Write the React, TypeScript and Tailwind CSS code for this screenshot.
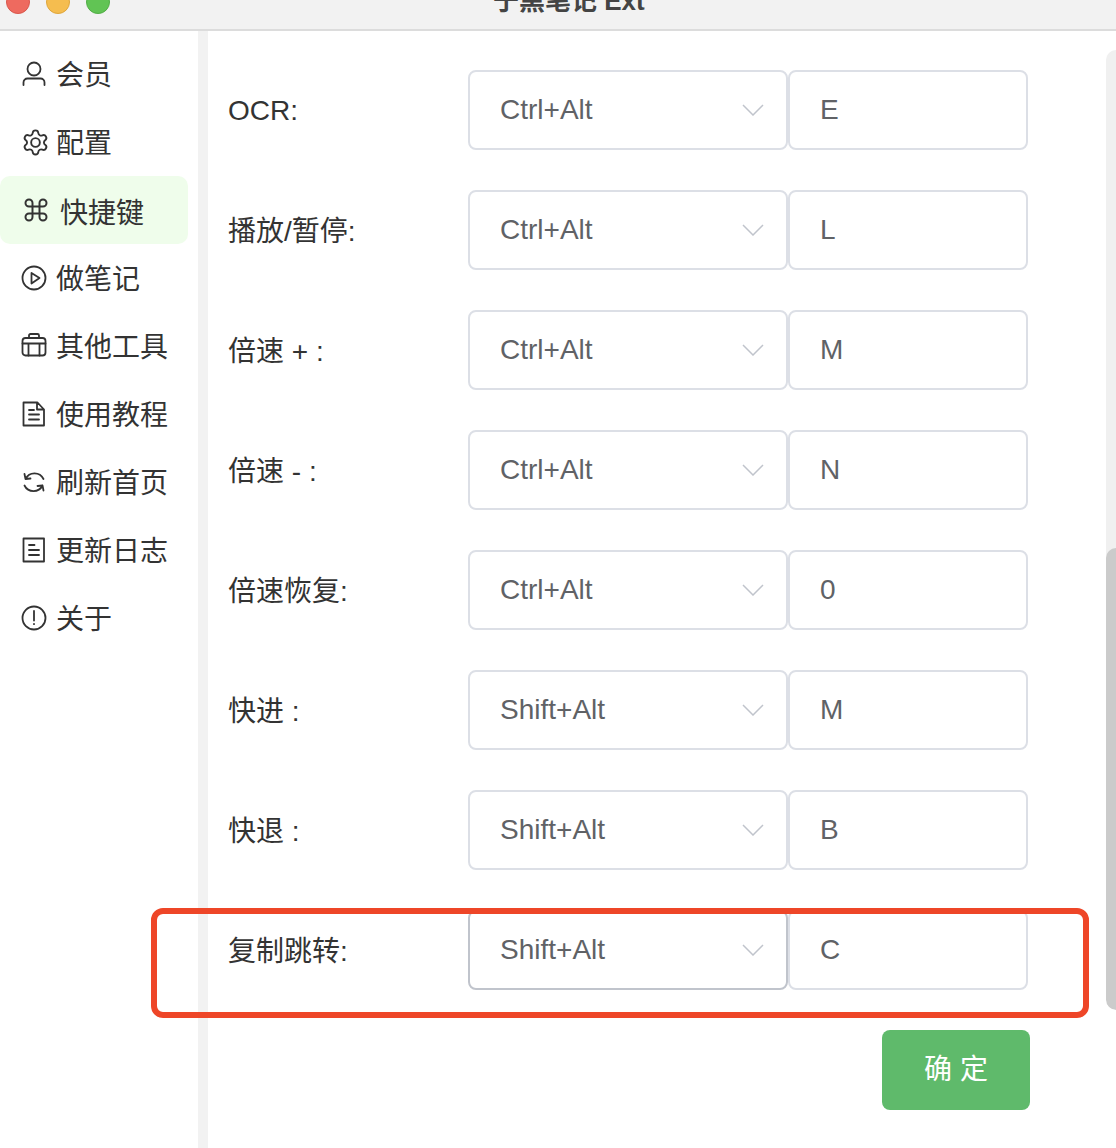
import React from "react";

const S = { fill: "none", stroke: "currentColor", strokeWidth: 1.8, strokeLinecap: "round" as const, strokeLinejoin: "round" as const };
const I = ({ children, view = "0 0 26 26", size = 26, width }: { children: React.ReactNode; view?: string; size?: number; width?: number }) => (
  <svg viewBox={view} width={size} height={size} className="shrink-0" {...S} strokeWidth={width ?? 1.8}>{children}</svg>
);

const menu: { label: string; icon: React.ReactNode; active?: boolean }[] = [
  { label: "会员", icon: <I><circle cx="13" cy="8" r="6.500" /><path d="M2.500 24v-2.500a4 4 0 0 1 4-4h13a4 4 0 0 1 4 4V24" /></I> },
  { label: "配置", icon: <I view="0 0 24 24" size={29} width={1.55}><path d="M9.671 4.136a2.34 2.34 0 0 1 4.659 0 2.34 2.34 0 0 0 3.319 1.915 2.34 2.34 0 0 1 2.33 4.033 2.34 2.34 0 0 0 0 3.831 2.34 2.34 0 0 1-2.33 4.033 2.34 2.34 0 0 0-3.319 1.915 2.34 2.34 0 0 1-4.659 0 2.34 2.34 0 0 0-3.32-1.915 2.34 2.34 0 0 1-2.33-4.033 2.34 2.34 0 0 0 0-3.831A2.34 2.34 0 0 1 6.350 6.051a2.34 2.34 0 0 0 3.320-1.915" /><circle cx="12" cy="12" r="3.600" /></I> },
  { label: "快捷键", active: true, icon: <I view="0 0 24 24" size={28} width={1.7}><path d="M15 6v12a3 3 0 1 0 3-3H6a3 3 0 1 0 3 3V6a3 3 0 1 0-3 3h12a3 3 0 1 0-3-3" /></I> },
  { label: "做笔记", icon: <I><circle cx="13" cy="13" r="11.500" /><path d="M10.500 8l8 5-8 5.500z" /></I> },
  { label: "其他工具", icon: <I><rect x="1.500" y="5" width="23" height="17.500" rx="3" /><path d="M8 5V2.500A1.500 1.500 0 0 1 9.500 1h7A1.500 1.500 0 0 1 18 2.500V5M1.500 10.500h23M7.500 10.500v12M18.500 10.500v12" /></I> },
  { label: "使用教程", icon: <I><path d="M2.500 1.500h14l6.500 7v16H2.500zM16 1.500v7h7M8 9h5M8 13.500h10M8 18.500h10" /></I> },
  { label: "刷新首页", icon: <I><path d="M4.500 10A10 10 0 0 1 22.500 10M21.500 16.500A10 10 0 0 1 3.500 16.500M3.500 5l1 5 5-.5M22.500 21.500l-1-5-5 .5" /></I> },
  { label: "更新日志", icon: <I><path d="M2.500 1.500h20.500v23H2.500zM8 8h5.500M8 13h10M8 18h10" /></I> },
  { label: "关于", icon: <I><circle cx="13" cy="13" r="11.500" /><path d="M13 6v9.500M13 18.800v.4" /></I> },
];

const rows = [
  ["OCR:", "Ctrl+Alt", "E"],
  ["播放/暂停:", "Ctrl+Alt", "L"],
  ["倍速 + :", "Ctrl+Alt", "M"],
  ["倍速 - :", "Ctrl+Alt", "N"],
  ["倍速恢复:", "Ctrl+Alt", "0"],
  ["快进 :", "Shift+Alt", "M"],
  ["快退 :", "Shift+Alt", "B"],
  ["复制跳转:", "Shift+Alt", "C"],
];

export default function App() {
  return (
    <div className="relative w-[1116px] h-[1148px] overflow-hidden bg-white text-[#333333] text-[28px] font-['Liberation_Sans','Noto_Sans_CJK_SC',sans-serif]">
      <header className="relative h-[31px] bg-[#f2f2f2] border-b-2 border-[#dcdcdc] overflow-hidden">
        <div className="flex gap-[16px] pl-[6px] -mt-[10px]">
          <span className="w-[24px] h-[24px] rounded-full bg-[#ee6a5f] border border-[#d9574c]" />
          <span className="w-[24px] h-[24px] rounded-full bg-[#f5bd4f] border border-[#dfa63b]" />
          <span className="w-[24px] h-[24px] rounded-full bg-[#61c454] border border-[#52ad46]" />
        </div>
        <div className="absolute left-[493px] -top-[18px] text-[26px] font-bold text-[#444444] whitespace-nowrap">于黑笔记 Ext</div>
      </header>

      <div className="flex h-[1117px]">
        <nav className="w-[198px] shrink-0 pt-[9px]">
          {menu.map((m) =>
            m.active ? (
              <div key={m.label} className="w-[188px] h-[68px] rounded-[10px] bg-[#effdeb] flex items-center gap-[10px] pl-[22px]">
                {m.icon}
                <span className="leading-none pt-[8px]">{m.label}</span>
              </div>
            ) : (
              <div key={m.label} className="h-[68px] flex items-center pl-[21px]">
                <span className="w-[35px] shrink-0 flex">{m.icon}</span>
                <span className="leading-none pt-[4px]">{m.label}</span>
              </div>
            )
          )}
        </nav>
        <div className="w-[10px] shrink-0 bg-[#f2f2f2]" />
        <main className="flex-1 pl-[20px] pt-[39px]">
          <div className="flex flex-col gap-[40px]">
            {rows.map(([label, mod, key], i) => (
              <div key={i} className="flex items-center h-[80px]">
                <div className={"w-[240px] shrink-0 " + (i === 0 ? "pt-[1px]" : "pt-[3px]")}>{label}</div>
                <div className={"w-[320px] h-[80px] rounded-[8px] border-2 flex items-center justify-between pl-[30px] pr-[22px] text-[#606266] " + (i === 7 ? "border-[#c0c4cc]" : "border-[#dcdfe6]")}>
                  <span>{mod}</span>
                  <svg width="22" height="12" viewBox="0 0 22 12" fill="none" stroke="#c0c4cc" strokeWidth="1.500"><path d="M1 1l10 10L21 1" /></svg>
                </div>
                <div className="w-[240px] h-[80px] rounded-[8px] border-2 border-[#dcdfe6] flex items-center pl-[30px] text-[#606266]">{key}</div>
              </div>
            ))}
          </div>
          <div className="flex justify-end w-[802px] mt-[40px]">
            <button className="w-[148px] h-[80px] rounded-[8px] bg-[#5fba6b] text-white">确 定</button>
          </div>
        </main>
      </div>

      <div className="absolute left-[1106px] top-[50px] w-[10px] h-[960px] rounded-l-[10px] bg-[#f0f0f0] overflow-hidden flex flex-col justify-end">
        <div className="h-[462px] rounded-l-[10px] bg-[#cbcbcb]" />
      </div>
      <div className="absolute left-[151px] top-[908px] w-[938px] h-[110px] rounded-[12px] border-[6px] border-[#ee4628] pointer-events-none" />
    </div>
  );
}
